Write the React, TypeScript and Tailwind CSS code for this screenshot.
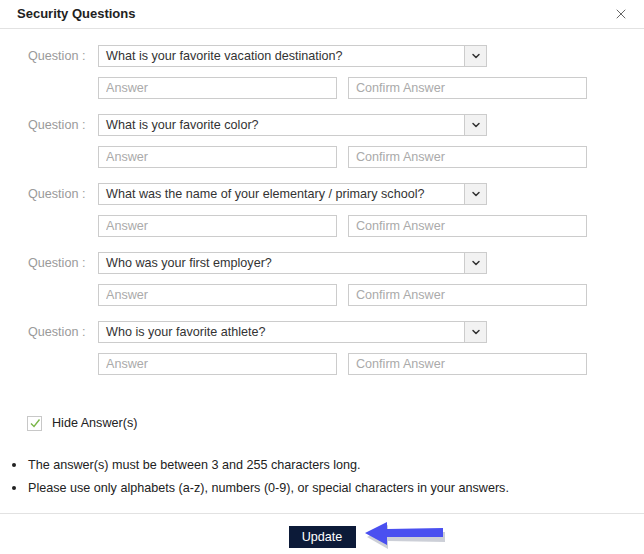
import { ChevronDown, X } from 'lucide-react';

const questions = [
  'What is your favorite vacation destination?',
  'What is your favorite color?',
  'What was the name of your elementary / primary school?',
  'Who was your first employer?',
  'Who is your favorite athlete?',
];

function QuestionRow({ text }: { text: string }) {
  return (
    <div className="flex flex-col gap-[10px]">
      <div className="flex items-center">
        <span className="w-[70px] text-[12.6px] text-[#9a9a9a]">Question :</span>
        <div className="flex h-[22px] w-[389px] items-stretch border border-[#cccccc] bg-white">
          <span className="flex-1 pl-[7px] text-[12.6px] leading-[20px] text-[#333333]">{text}</span>
          <span className="flex w-[22px] items-center justify-center border-l border-[#cccccc] bg-[#f2f2f2]">
            <ChevronDown className="h-[12px] w-[12px] text-[#333333]" strokeWidth={3} />
          </span>
        </div>
      </div>
      <div className="ml-[70px] flex gap-[11px]">
        <input
          placeholder="Answer"
          className="h-[22px] w-[239px] border border-[#cccccc] px-[7px] text-[12.6px] outline-none placeholder:text-[#aaaaaa]"
        />
        <input
          placeholder="Confirm Answer"
          className="h-[22px] w-[239px] border border-[#cccccc] px-[7px] text-[12.6px] outline-none placeholder:text-[#aaaaaa]"
        />
      </div>
    </div>
  );
}

export default function App() {
  return (
    <div className="h-[554px] w-[644px] overflow-hidden bg-white text-[#222222]" style={{ fontFamily: '"Liberation Sans", Arial, sans-serif' }}>
      {/* Header */}
      <div className="flex h-[29px] items-center justify-between border-b border-[#e2e2e2] pl-[17px] pr-[15px]">
        <h1 className="text-[13px] font-bold text-[#222222]">Security Questions</h1>
        <X className="h-[16px] w-[16px] text-[#666666]" strokeWidth={1.5} />
      </div>

      {/* Questions */}
      <div className="flex flex-col gap-[15px] pl-[28px] pt-[16px]">
        {questions.map(q => (
          <QuestionRow key={q} text={q} />
        ))}
      </div>

      {/* Hide answers */}
      <div className="mt-[39px] flex items-center gap-[10px] pl-[27px] leading-[18px]">
        <span className="flex h-[15px] w-[15px] items-center justify-center border border-[#c8c8c8] bg-white">
          <svg viewBox="0 0 12 12" className="h-[12px] w-[12px]">
            <path d="M2 6.5 L5 9.5 L10.5 2.5" fill="none" stroke="#7ab648" strokeWidth="1.4" />
          </svg>
        </span>
        <span className="text-[12.6px] text-[#222222]">Hide Answer(s)</span>
      </div>

      {/* Notes */}
      <ul className="mt-[24px] flex flex-col gap-[5px] pl-[12px] text-[12.6px] leading-[18px] text-[#222222]">
        <li className="flex items-center gap-[12px]">
          <span className="h-[4px] w-[4px] rounded-full bg-[#222222]" />
          The answer(s) must be between 3 and 255 characters long.
        </li>
        <li className="flex items-center gap-[12px]">
          <span className="h-[4px] w-[4px] rounded-full bg-[#222222]" />
          Please use only alphabets (a-z), numbers (0-9), or special characters in your answers.
        </li>
      </ul>

      {/* Footer */}
      <div className="mt-[16px] flex justify-center border-t border-[#e2e2e2] pt-[10px]">
        <div className="relative">
          <button className="h-[22px] w-[67px] bg-[#0c1a38] text-[12.6px] text-white">Update</button>
          <svg viewBox="0 0 84 30" className="absolute left-[74px] top-[-4px] h-[30px] w-[84px]">
            <path d="M4 17 L25 5 L25 13 L82 12 L82 22 L25 21 L25 29 Z" fill="#9aa0b0" opacity="0.5" />
            <path d="M2 13 L24 2 L24 9 L80 8 L80 17 L24 17 L24 25 Z" fill="#4a50f0" />
          </svg>
        </div>
      </div>
    </div>
  );
}
